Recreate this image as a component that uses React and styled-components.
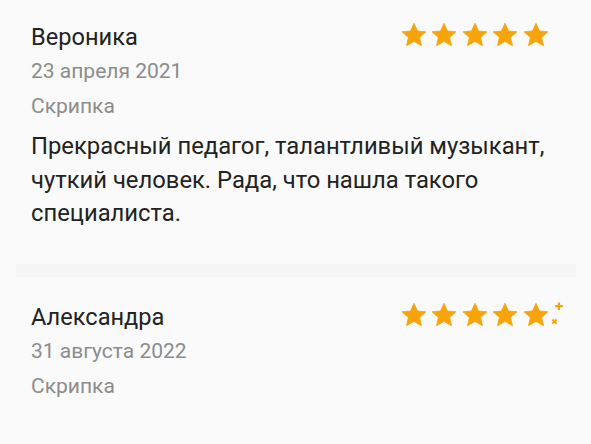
import React from 'react'
import styled, { createGlobalStyle } from "styled-components";

const GlobalStyle = createGlobalStyle`
  body {
    margin: 0;
    background: #fafafa;
    font-family: Roboto, "Noto Sans", sans-serif;
  }
`;

const Page = styled.div`
  width: 591px;
  height: 444px;
  overflow: hidden;
  background: #fafafa;
  padding-top: 20px;
  box-sizing: border-box;
`;

const Card = styled.div`
  padding: 0 31px;
`;

const Header = styled.div`
  display: flex;
  justify-content: space-between;
  align-items: flex-start;
`;

const Name = styled.div`
  font-size: 23.6px;
  line-height: 34px;
  color: #222;
`;

const Stars = styled.div`
  display: flex;
  gap: 4.6px;
  margin-top: 2px;
  margin-right: 11px;
`;

const Meta = styled.div`
  font-size: 21px;
  line-height: 26px;
  color: #8c8c8c;
  margin-top: ${p => p.$top}px;
`;

const Text = styled.p`
  margin: 11px 0 0;
  font-size: 23.8px;
  line-height: 33.5px;
  color: #222;
`;

const Divider = styled.div`
  height: 13px;
  margin: 33px 15px 23px 16px;
  background: #f5f5f5;
`;

const STAR = "M13 1.2l3.5 7.8 8.5.8-6.4 5.6 1.9 8.3L13 19.4l-7.5 4.3 1.9-8.3L1 9.8l8.5-.8z";

const Star = () => (
  <svg width="26" height="26" viewBox="0 0 26 26">
    <path d={STAR} fill="#f7a40b" stroke="#f7a40b" strokeWidth="0.8" strokeLinejoin="round" />
  </svg>
);

const SparkStar = () => (
  <svg width="44" height="26" viewBox="0 0 44 26" style={{ marginRight: -18 }}>
    <path d={STAR} fill="#f7a40b" stroke="#f7a40b" strokeWidth="0.8" strokeLinejoin="round" />
    <path d="M36 0.5v7.5M32.2 4.2h7.6" stroke="#f7a40b" strokeWidth="2.2" />
    <path d="M29.5 17.5l4 4M33.5 17.5l-4 4" stroke="#f7a40b" strokeWidth="1.9" />
  </svg>
);

const Rating = ({ value }) => (
  <Stars>
    {[0, 1, 2, 3].map(i => <Star key={i} />)}
    {value === 5 ? <Star /> : <SparkStar />}
  </Stars>
);

const reviews = [
  {
    name: "Вероника",
    date: "23 апреля 2021",
    subject: "Скрипка",
    rating: 5,
    text: "Прекрасный педагог, талантливый музыкант, чуткий человек. Рада, что нашла такого специалиста."
  },
  {
    name: "Александра",
    date: "31 августа 2022",
    subject: "Скрипка",
    rating: 4.5,
  }
];

const App = () => {
  return (
    <Page>
      <GlobalStyle />
      {reviews.map((r, i) => (
        <React.Fragment key={r.name}>
          {i > 0 && <Divider />}
          <Card>
            <Header>
              <Name>{r.name}</Name>
              <Rating value={r.rating} />
            </Header>
            <Meta $top={4}>{r.date}</Meta>
            <Meta $top={9}>{r.subject}</Meta>
            {r.text && <Text>{r.text}</Text>}
          </Card>
        </React.Fragment>
      ))}
    </Page>
  );
};

export default App;
